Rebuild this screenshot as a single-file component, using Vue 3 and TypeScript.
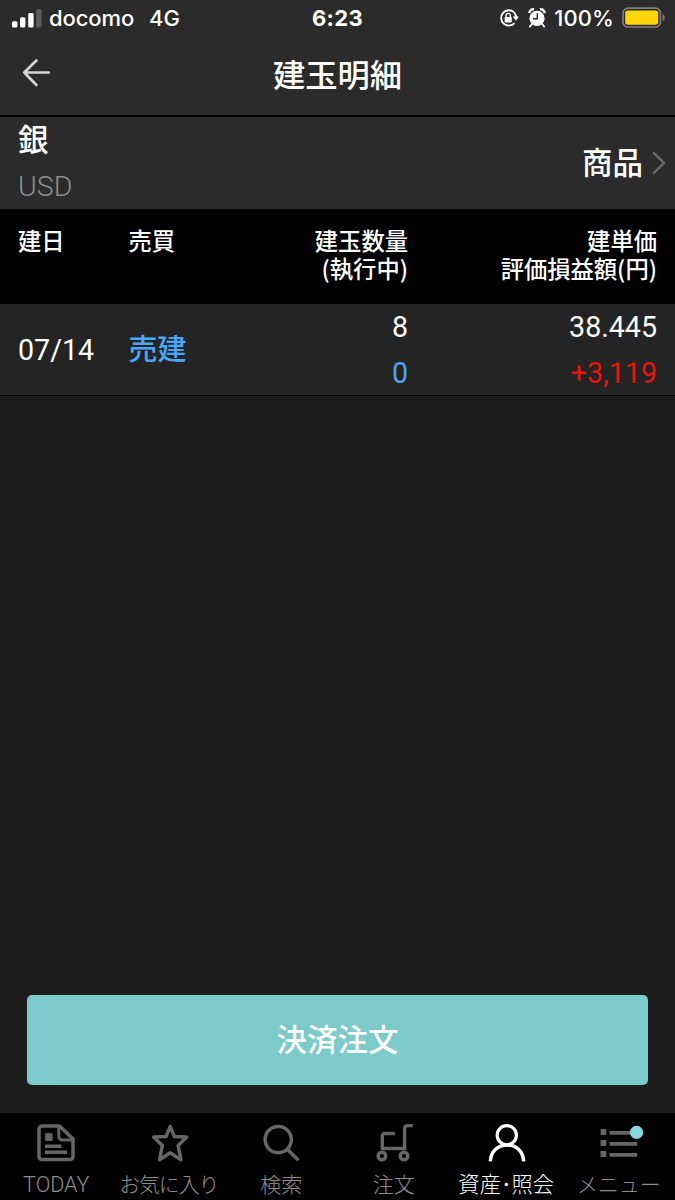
<script setup lang="ts">
interface Position {
  date: string
  side: string
  quantity: string
  executing: string
  price: string
  profit: string
}

interface Tab {
  id: string
  label: string
  active?: boolean
}

const positions: Position[] = [
  { date: '07/14', side: '売建', quantity: '8', executing: '0', price: '38.445', profit: '+3,119' },
]

const tabs: Tab[] = [
  { id: 'today', label: 'TODAY' },
  { id: 'favorite', label: 'お気に入り' },
  { id: 'search', label: '検索' },
  { id: 'order', label: '注文' },
  { id: 'assets', label: '資産･照会', active: true },
  { id: 'menu', label: 'メニュー' },
]
</script>

<template>
  <div class="screen">
    <div class="status">
      <div class="status-left">
        <svg class="signal" width="31" height="20" viewBox="0 0 31 20">
          <rect x="0" y="13.2" width="5.4" height="6.3" rx="1.5" fill="#fff" />
          <rect x="8" y="9.3" width="5.4" height="10.2" rx="1.5" fill="#fff" />
          <rect x="16.2" y="5" width="5.4" height="14.5" rx="1.5" fill="#fff" />
          <rect x="24.2" y="1" width="5.4" height="18.5" rx="1.5" fill="#5c5c5c" />
        </svg>
        <span class="carrier">docomo</span>
        <span class="network">4G</span>
      </div>
      <span class="clock">6:23</span>
      <div class="status-right">
        <svg width="20" height="20" viewBox="0 0 20 20" fill="none">
          <path d="M14.9 4.1A7.7 7.7 0 1 0 15.5 15.2" stroke="#fff" stroke-width="1.8" />
          <path d="M14.9 4.1A7.7 7.7 0 0 1 17 10" stroke="#fff" stroke-width="1.8" />
          <path d="M13.8 8.6h6.2l-3.1 4.2z" fill="#fff" />
          <rect x="5.6" y="9" width="7.2" height="5.4" rx=".8" fill="#fff" />
          <path d="M7 9.4V7.6a2.2 2.2 0 0 1 4.4 0v1.8" stroke="#fff" stroke-width="1.4" />
        </svg>
        <svg class="alarm" width="18" height="20" viewBox="0 0 18 20" fill="none">
          <circle cx="9" cy="10.4" r="7.6" fill="#fff" />
          <path d="M1.3 5.1A4 4 0 0 1 6 1.3M12 1.3a4 4 0 0 1 4.7 3.8" stroke="#fff" stroke-width="2.4" />
          <path d="M3.9 16 1.8 18.6M14.1 16l2.1 2.6" stroke="#fff" stroke-width="1.8" stroke-linecap="round" />
          <path d="M9.3 5.2v5.6H5" stroke="#2b2b2b" stroke-width="1.4" />
        </svg>
        <span class="percent">100%</span>
        <svg class="battery" width="44" height="22" viewBox="0 0 44 22">
          <rect x="1" y="1.2" width="37.4" height="18.8" rx="5" fill="none" stroke="#7d7d7d" stroke-width="1.7" />
          <rect x="3.2" y="3.4" width="33" height="14.4" rx="2.8" fill="#ffd60a" />
          <path d="M40.6 7.2c2.8 1.2 2.8 5.6 0 6.8z" fill="#7d7d7d" />
        </svg>
      </div>
    </div>

    <header class="titlebar">
      <svg class="back" width="30" height="30" viewBox="0 0 30 30" fill="none">
        <path d="M26.8 14.5H2.3M14.4 2.5 2.3 14.5 14.4 27" stroke="#d4d4d4" stroke-width="2.7" stroke-linecap="round" stroke-linejoin="round" />
      </svg>
      <h1>建玉明細</h1>
    </header>

    <section class="product">
      <div class="product-name">
        <strong>銀</strong>
        <span>USD</span>
      </div>
      <div class="product-link">
        <span>商品</span>
        <svg width="14" height="24" viewBox="0 0 14 24" fill="none">
          <path d="M1.2 1.3 12 12 1.2 22.5" stroke="#696969" stroke-width="2.4" />
        </svg>
      </div>
    </section>

    <div class="row head">
      <span>建日</span>
      <span>売買</span>
      <div class="right"><span>建玉数量</span><span>(執行中)</span></div>
      <div class="right"><span>建単価</span><span>評価損益額(円)</span></div>
    </div>

    <div v-for="p in positions" :key="p.date" class="row entry">
      <span class="date">{{ p.date }}</span>
      <span class="side">{{ p.side }}</span>
      <div class="right">
        <span>{{ p.quantity }}</span>
        <span class="executing">{{ p.executing }}</span>
      </div>
      <div class="right">
        <span>{{ p.price }}</span>
        <span class="profit">{{ p.profit }}</span>
      </div>
    </div>

    <main class="body">
      <button class="settle" type="button">決済注文</button>
    </main>

    <nav class="tabs">
      <div v-for="t in tabs" :key="t.id" class="tab" :class="[t.id, { active: t.active }]">
        <svg width="40" height="40" viewBox="0 0 40 40" fill="none" stroke="currentColor" stroke-width="3.5">
          <template v-if="t.id === 'today'">
            <path d="M23.5 3.1H6a3 3 0 0 0-3 3v27.5a3 3 0 0 0 3 3h28a3 3 0 0 0 3-3V16z" stroke-linejoin="round" />
            <path d="M22.8 3.5v10a3.5 3.5 0 0 0 3.5 3.5H37" stroke-width="3" />
            <path d="M9.3 10.3h7.2v7.6H9.3zM9 21.6h16.5V25H9zM9 27.5h22v3.4H9z" fill="currentColor" stroke="none" />
          </template>
          <path
            v-else-if="t.id === 'favorite'"
            d="M21.2 3.6 25.4 13.6l12.2.5-8.5 8.5 2.8 14.1-10.7-6.9-10.6 6.9 2.7-14.1-8.7-8.5 12.4-.5z"
            stroke-linejoin="round"
            stroke-width="3.5"
          />
          <template v-else-if="t.id === 'search'">
            <circle cx="17.2" cy="16.6" r="13.1" />
            <path d="M26.6 26.6 37.5 37.3" />
          </template>
          <template v-else-if="t.id === 'order'">
            <path d="M20.9 10.5h-10a2.6 2.6 0 0 0-2.6 2.6v14M38.9 2.6h-5.6a2.7 2.7 0 0 0-2.7 2.7v22M8.3 25.5h22.3" stroke-width="3.4" />
            <circle cx="7.9" cy="33" r="3.8" stroke-width="3.4" />
            <circle cx="30" cy="33" r="3.8" stroke-width="3.4" />
          </template>
          <template v-else-if="t.id === 'assets'">
            <circle cx="20.8" cy="12.2" r="9.6" stroke-width="3.2" />
            <path d="M4.3 38.3C5 28 12 21.9 21 21.9S37 28 37.7 38.3" stroke-width="3.5" />
          </template>
          <template v-else>
            <path d="M1.6 6h5.7v6H1.6zM1.6 17h5.7v6H1.6zM1.6 28h5.7v6H1.6zM10.6 8h27.6v3.7H10.6zM10.6 19h27.6v3.7H10.6zM10.6 30h27.6v3.7H10.6z" fill="currentColor" stroke="none" />
            <circle cx="37.6" cy="9.4" r="6.6" fill="#86dadd" stroke="none" />
          </template>
        </svg>
        <span class="label">{{ t.label }}</span>
      </div>
    </nav>
  </div>
</template>

<style>
body {
  margin: 0;
  background: #1c1c1c;
}
</style>

<style scoped>
.screen {
  width: 675px;
  height: 1200px;
  display: flex;
  flex-direction: column;
  overflow: hidden;
  background: #1c1c1c;
  color: #fff;
  font-family: Roboto, 'Noto Sans CJK JP', sans-serif;
}

.status {
  box-sizing: border-box;
  height: 36px;
  padding: 0 9px 0 12px;
  display: grid;
  grid-template-columns: 300px 1fr 300px;
  align-items: center;
  background: #2b2b2b;
  font-family: Inter, sans-serif;
  font-size: 22px;
  font-weight: 500;
  line-height: 36px;
}

.status-left,
.status-right {
  display: flex;
  align-items: center;
  white-space: nowrap;
}

.status-right {
  justify-content: flex-end;
}

.signal {
  margin-right: 6px;
  margin-bottom: 1px;
}

.carrier {
  letter-spacing: -0.1px;
}

.network {
  margin-left: 15px;
}

.clock {
  font-weight: 700;
  letter-spacing: 0.3px;
}

.alarm {
  margin-left: 9px;
}

.percent {
  margin-left: 8px;
  letter-spacing: 0.1px;
}

.battery {
  margin-left: 8px;
}

.titlebar {
  box-sizing: border-box;
  height: 81px;
  padding: 0 22px 5px;
  display: grid;
  grid-template-columns: 30px 1fr 30px;
  align-items: center;
  background: #2b2b2b;
  border-bottom: 2px solid #000;
}

.titlebar h1 {
  margin: 0;
  padding-top: 5px;
  font-size: 32.3px;
  font-weight: 500;
  line-height: 48px;
  text-align: center;
}

.product {
  box-sizing: border-box;
  height: 92px;
  padding: 0 9px 0 18px;
  display: flex;
  justify-content: space-between;
  align-items: center;
  background: #2b2b2b;
}

.product-name {
  display: flex;
  flex-direction: column;
}

.product-name strong {
  padding-top: 1px;
  font-size: 30.5px;
  font-weight: 500;
  line-height: 46px;
}

.product-name span {
  color: #8e8e8e;
  font-size: 28.5px;
  font-weight: 300;
  line-height: 45px;
}

.product-link {
  display: flex;
  align-items: center;
  gap: 9px;
  font-size: 30.5px;
  font-weight: 500;
  line-height: 46px;
}

.product-link span {
  padding-top: 1px;
}

.row {
  box-sizing: border-box;
  padding: 0 18px;
  display: grid;
  grid-template-columns: 110.5px 119.5px 160px 1fr;
}

.right {
  display: flex;
  flex-direction: column;
  text-align: right;
}

.head {
  height: 95px;
  padding-top: 17px;
  background: #000;
  font-family: 'Noto Sans CJK JP', sans-serif;
  font-size: 23.3px;
  font-weight: 500;
  line-height: 28px;
}

.entry {
  height: 92px;
  align-items: center;
  background: #242424;
  border-bottom: 1px solid #000;
  font-size: 28.6px;
  line-height: 46px;
}

.side {
  color: #4ba7f5;
  font-size: 29px;
  font-weight: 500;
}

.executing {
  color: #4ba7f5;
}

.profit {
  color: #e81410;
}

.body {
  flex: 1;
  display: flex;
  flex-direction: column;
  justify-content: flex-end;
  padding: 0 27px 28px;
}

.settle {
  height: 90px;
  padding: 0 0 5px;
  border: 0;
  border-radius: 5px;
  background: #7dcaca;
  color: #fff;
  font-family: 'Noto Sans CJK JP', sans-serif;
  font-size: 30.5px;
  font-weight: 500;
}

.tabs {
  height: 87px;
  display: grid;
  grid-template-columns: repeat(6, 1fr);
  background: #000;
}

.tab {
  padding-top: 10px;
  display: flex;
  flex-direction: column;
  align-items: center;
  color: #666;
}

.tab svg {
  overflow: visible;
}

.label {
  margin-top: 7px;
  color: #8e8e8e;
  font-size: 21px;
  font-weight: 300;
  line-height: 30px;
  white-space: nowrap;
}

.today .label {
  font-size: 21.5px;
}

.favorite .label {
  letter-spacing: -1.2px;
}

.active,
.active .label {
  color: #fff;
}

.active .label {
  font-size: 21.3px;
}
</style>
